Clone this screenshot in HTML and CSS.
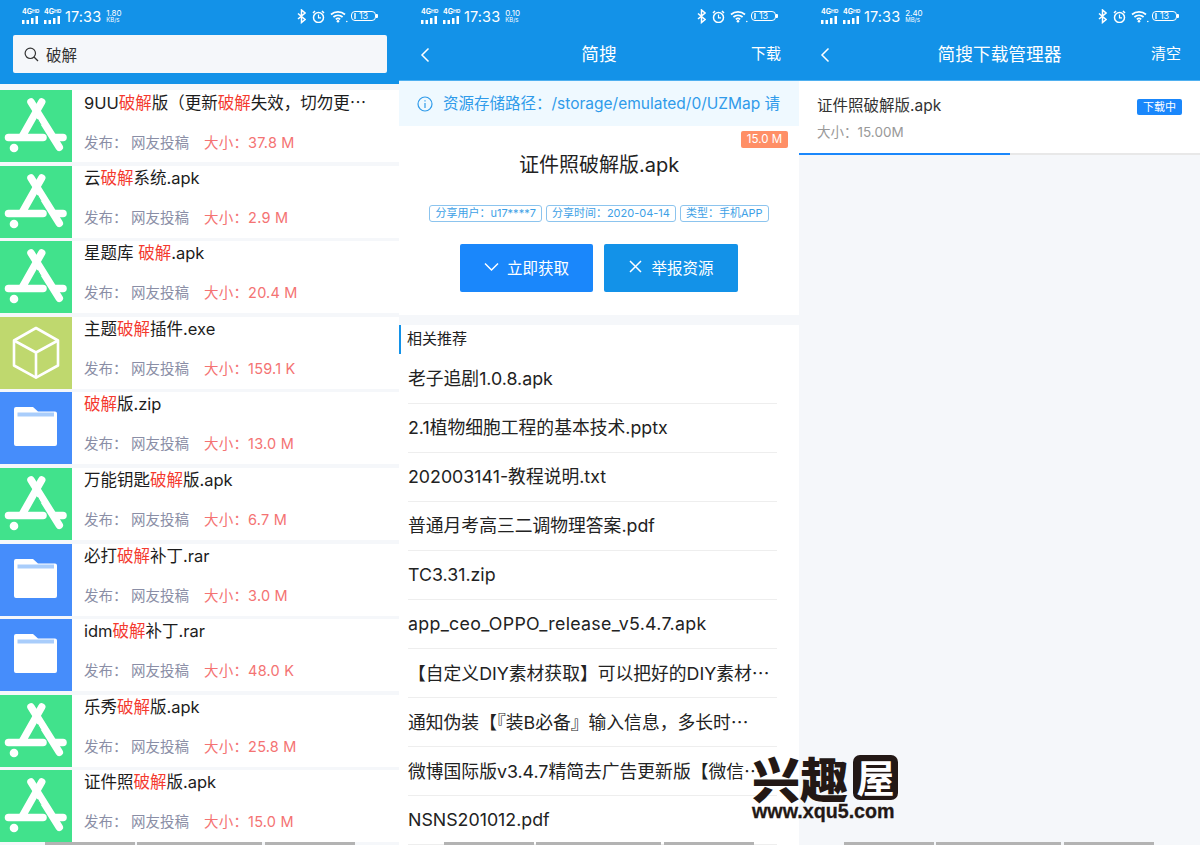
FILE: index.html
```html
<!DOCTYPE html>
<html lang="zh-CN">
<head>
<meta charset="utf-8">
<title>简搜</title>
<link rel="stylesheet" href="styles.css">
</head>
<body>
<svg class="defs" width="0" height="0">
  <defs>
    <g id="appstore">
      <g fill="none" stroke="#fff" stroke-width="7.500" stroke-linecap="round">
        <path d="M31 12 59.300 57.300"/><path d="M41.700 12 23 45"/><path d="M8.500 47.500H43"/><path d="M55 47.500H63"/>
      </g>
      <path d="M37.500 29 41 35" stroke="#41e28c" stroke-width="1"/>
      <circle cx="14" cy="58" r="4.300" fill="#fff"/>
    </g>
    <g id="cube" fill="none" stroke="#fff" stroke-width="2.600" stroke-linejoin="round">
      <path d="M36 11 58 23.500V48.500L36 60.700 14 48.500V23.500Z"/><path d="M14 23.500 36 35.500 58 23.500M36 35.500V60.700"/>
    </g>
    <g id="folder">
      <path d="M14 17a2 2 0 0 1 2-2H33l5 4.500H55a2 2 0 0 1 2 2V52a2 2 0 0 1-2 2H16a2 2 0 0 1-2-2Z" fill="#fff"/>
      <rect x="17.500" y="20.500" width="36.500" height="4" fill="#a9cdfb"/>
    </g>
    <g id="signal" fill="#fff">
      <rect x="0" y="4" width="2.500" height="4"/><rect x="4.500" y="4" width="2.500" height="4"/><rect x="9" y="2" width="2.500" height="6"/><rect x="13.500" y="0" width="2.500" height="8"/>
    </g>
    <g id="bt" fill="none" stroke="#fff" stroke-width="1.500">
      <path d="M1 4.500 8 10.500 4.500 13.500V1L8 4 1 10"/>
    </g>
    <g id="alarm" fill="none" stroke="#fff">
      <circle cx="6.500" cy="7.500" r="5" stroke-width="1.500"/><path d="M6.500 4.500V7.800H9" stroke-width="1.200"/><path d="M1 3 3 1M12 3 10 1" stroke-width="1.500"/>
    </g>
    <g id="wifi" fill="none" stroke="#fff" stroke-width="1.700">
      <path d="M1 5.500A10.500 10.500 0 0 1 15 5.500M3.400 8A7 7 0 0 1 12.600 8M5.800 10.300A3.500 3.500 0 0 1 10.200 10.300"/>
      <circle cx="8" cy="12.300" r="1.300" fill="#fff" stroke="none"/><circle cx="16.800" cy="12.500" r=".8" fill="#fff" stroke="none"/>
    </g>
  </defs>
</svg>
<main class="screens">

  <section class="screen screen-search">
    <header class="blue">
      <div class="status">
        <div class="st-left">
          <span class="net"><i>4G<sup>HD</sup></i><svg width="16" height="8"><use href="#signal"/></svg></span>
          <span class="net"><i>4G<sup>HD</sup></i><svg width="16" height="8"><use href="#signal"/></svg></span>
          <span class="time">17:33</span>
          <span class="speed"><b>1.80</b><b class="unit">KB/s</b></span>
        </div>
        <div class="st-right">
          <svg class="ic-bt" width="9" height="15"><use href="#bt"/></svg>
          <svg width="13" height="13"><use href="#alarm"/></svg>
          <svg width="18" height="14"><use href="#wifi"/></svg>
          <span class="battery">13</span>
        </div>
      </div>
      <div class="searchbox">
        <svg width="15" height="15" viewBox="0 0 15 15" fill="none" stroke="#333" stroke-width="1.200"><circle cx="6.300" cy="6.300" r="5.200"/><path d="M10 10 14 14"/></svg>
        <span>破解</span>
      </div>
    </header>
    <ul class="results">
      <li class="row"><svg class="thumb green" viewBox="0 0 72 72"><use href="#appstore"/></svg><div class="info"><p class="name">9UU<em>破解</em>版（更新<em>破解</em>失效，切勿更<span class="dots">…</span></p><p class="meta"><span class="pub">发布：</span><span class="pub author">网友投稿</span><span class="size">大小：37.8 M</span></p></div></li>
      <li class="row"><svg class="thumb green" viewBox="0 0 72 72"><use href="#appstore"/></svg><div class="info"><p class="name">云<em>破解</em>系统.apk</p><p class="meta"><span class="pub">发布：</span><span class="pub author">网友投稿</span><span class="size">大小：2.9 M</span></p></div></li>
      <li class="row"><svg class="thumb green" viewBox="0 0 72 72"><use href="#appstore"/></svg><div class="info"><p class="name">星题库 <em>破解</em>.apk</p><p class="meta"><span class="pub">发布：</span><span class="pub author">网友投稿</span><span class="size">大小：20.4 M</span></p></div></li>
      <li class="row"><svg class="thumb lime" viewBox="0 0 72 72"><use href="#cube"/></svg><div class="info"><p class="name">主题<em>破解</em>插件.exe</p><p class="meta"><span class="pub">发布：</span><span class="pub author">网友投稿</span><span class="size">大小：159.1 K</span></p></div></li>
      <li class="row"><svg class="thumb azure" viewBox="0 0 72 72"><use href="#folder"/></svg><div class="info"><p class="name"><em>破解</em>版.zip</p><p class="meta"><span class="pub">发布：</span><span class="pub author">网友投稿</span><span class="size">大小：13.0 M</span></p></div></li>
      <li class="row"><svg class="thumb green" viewBox="0 0 72 72"><use href="#appstore"/></svg><div class="info"><p class="name">万能钥匙<em>破解</em>版.apk</p><p class="meta"><span class="pub">发布：</span><span class="pub author">网友投稿</span><span class="size">大小：6.7 M</span></p></div></li>
      <li class="row"><svg class="thumb azure" viewBox="0 0 72 72"><use href="#folder"/></svg><div class="info"><p class="name">必打<em>破解</em>补丁.rar</p><p class="meta"><span class="pub">发布：</span><span class="pub author">网友投稿</span><span class="size">大小：3.0 M</span></p></div></li>
      <li class="row"><svg class="thumb azure" viewBox="0 0 72 72"><use href="#folder"/></svg><div class="info"><p class="name">idm<em>破解</em>补丁.rar</p><p class="meta"><span class="pub">发布：</span><span class="pub author">网友投稿</span><span class="size">大小：48.0 K</span></p></div></li>
      <li class="row"><svg class="thumb green" viewBox="0 0 72 72"><use href="#appstore"/></svg><div class="info"><p class="name">乐秀<em>破解</em>版.apk</p><p class="meta"><span class="pub">发布：</span><span class="pub author">网友投稿</span><span class="size">大小：25.8 M</span></p></div></li>
      <li class="row"><svg class="thumb green" viewBox="0 0 72 72"><use href="#appstore"/></svg><div class="info"><p class="name">证件照<em>破解</em>版.apk</p><p class="meta"><span class="pub">发布：</span><span class="pub author">网友投稿</span><span class="size">大小：15.0 M</span></p></div></li>
    </ul>
    <div class="navbar"><i class="n1"></i><i class="n2"></i><i class="n3"></i></div>
  </section>

  <section class="screen screen-detail">
    <header class="blue">
      <div class="status">
        <div class="st-left">
          <span class="net"><i>4G<sup>HD</sup></i><svg width="16" height="8"><use href="#signal"/></svg></span>
          <span class="net"><i>4G<sup>HD</sup></i><svg width="16" height="8"><use href="#signal"/></svg></span>
          <span class="time">17:33</span>
          <span class="speed"><b>0.10</b><b class="unit">KB/s</b></span>
        </div>
        <div class="st-right">
          <svg class="ic-bt" width="9" height="15"><use href="#bt"/></svg>
          <svg width="13" height="13"><use href="#alarm"/></svg>
          <svg width="18" height="14"><use href="#wifi"/></svg>
          <span class="battery">13</span>
        </div>
      </div>
      <div class="titlebar">
        <svg class="back" width="10" height="16" viewBox="0 0 10 16" fill="none" stroke="#fff" stroke-width="1.500"><path d="M8.500 1.500 2 8 8.500 14.500"/></svg>
        <h1>简搜</h1>
        <span class="action">下载</span>
      </div>
    </header>
    <div class="notice">
      <svg width="16" height="16" viewBox="0 0 16 16" fill="none" stroke="#2f9bea" stroke-width="1.200"><circle cx="8" cy="8" r="7"/><path d="M8 7V12M8 4.200V5.600"/></svg>
      <span>资源存储路径：/storage/emulated/0/UZMap 请</span>
    </div>
    <div class="card">
      <span class="sizebadge">15.0 M</span>
      <h2>证件照破解版.apk</h2>
      <div class="tags"><span>分享用户：u17****7</span><span>分享时间：2020-04-14</span><span>类型：手机APP</span></div>
      <div class="buttons">
        <a class="btn btn-get"><svg width="15" height="15" viewBox="0 0 15 15" fill="none" stroke="#fff" stroke-width="1.500"><path d="M1 4.500 7.500 11 14 4.500"/></svg>立即获取</a>
        <a class="btn btn-report"><svg width="15" height="15" viewBox="0 0 15 15" fill="none" stroke="#fff" stroke-width="1.500"><path d="M2 2 13 13M13 2 2 13"/></svg>举报资源</a>
      </div>
    </div>
    <div class="related">
      <h3>相关推荐</h3>
      <ul class="files">
        <li>老子追剧1.0.8.apk</li>
        <li>2.1植物细胞工程的基本技术.pptx</li>
        <li>202003141-教程说明.txt</li>
        <li>普通月考高三二调物理答案.pdf</li>
        <li>TC3.31.zip</li>
        <li class="wide">app_ceo_OPPO_release_v5.4.7.apk</li>
        <li>【自定义DIY素材获取】可以把好的DIY素材<span class="dots">…</span></li>
        <li>通知伪装【『装B必备』输入信息，多长时<span class="dots">…</span></li>
        <li>微博国际版v3.4.7精简去广告更新版【微信<span class="dots">…</span></li>
        <li>NSNS201012.pdf</li>
      </ul>
    </div>
    <div class="navbar"><i class="n1"></i><i class="n2"></i><i class="n3"></i></div>
  </section>

  <section class="screen screen-manager">
    <header class="blue">
      <div class="status">
        <div class="st-left">
          <span class="net"><i>4G<sup>HD</sup></i><svg width="16" height="8"><use href="#signal"/></svg></span>
          <span class="net"><i>4G<sup>HD</sup></i><svg width="16" height="8"><use href="#signal"/></svg></span>
          <span class="time">17:33</span>
          <span class="speed"><b>2.40</b><b class="unit">MB/s</b></span>
        </div>
        <div class="st-right">
          <svg class="ic-bt" width="9" height="15"><use href="#bt"/></svg>
          <svg width="13" height="13"><use href="#alarm"/></svg>
          <svg width="18" height="14"><use href="#wifi"/></svg>
          <span class="battery">13</span>
        </div>
      </div>
      <div class="titlebar">
        <svg class="back" width="10" height="16" viewBox="0 0 10 16" fill="none" stroke="#fff" stroke-width="1.500"><path d="M8.500 1.500 2 8 8.500 14.500"/></svg>
        <h1>简搜下载管理器</h1>
        <span class="action">清空</span>
      </div>
    </header>
    <div class="task">
      <div class="task-body">
        <div class="task-text">
          <p class="task-name">证件照破解版.apk</p>
          <p class="task-size">大小：15.00M</p>
        </div>
        <span class="state">下载中</span>
      </div>
      <div class="progress"><div class="progress-fill"></div></div>
    </div>
    <div class="navbar"><i class="n1"></i><i class="n2"></i><i class="n3"></i></div>
  </section>
</main>

<div class="watermark">
  <div class="wm-top"><span class="wm-big">兴趣</span><span class="wm-box">屋</span></div>
  <div class="wm-url">www.xqu5.com</div>
</div>
</body>
</html>
```

FILE: styles.css
```css
* { box-sizing: border-box; }
html, body { margin: 0; padding: 0; }
body {
  width: 1200px;
  height: 845px;
  overflow: hidden;
  position: relative;
  background: #fff;
  font-family: Inter, "Noto Sans CJK SC", "Liberation Sans", sans-serif;
  color: #222;
}
p, h1, h2, h3, ul { margin: 0; padding: 0; font-weight: 400; }
ul { list-style: none; }
em { font-style: normal; color: #f43a2f; }
.defs { position: absolute; }
.dots { font-family: "Noto Sans CJK SC", sans-serif; }

.screens { display: flex; width: 1200px; height: 845px; }
.screen { position: relative; height: 845px; overflow: hidden; flex: none; }
.screen-search { width: 399px; background: #f5f7fa; }
.screen-detail { width: 400px; background: #fff; }
.screen-manager { width: 401px; background: #f5f7fa; }

.blue { background: #1392e8; }
.screen-search .blue { height: 84px; }
.screen-detail .blue, .screen-manager .blue { height: 81px; border-bottom: 1px solid #4fb0f0; }

.status { height: 30px; display: flex; justify-content: space-between; align-items: center; padding: 0 22px; color: #fff; }
.st-left, .st-right { display: flex; align-items: center; }
.net { display: flex; flex-direction: column; width: 17px; margin-right: 5px; margin-top: 1px; }
.net i { font-style: normal; font-weight: 700; font-size: 7px; line-height: 7px; height: 7px; margin-bottom: 1px; white-space: nowrap; }
.net sup { font-size: 5px; line-height: 5px; vertical-align: 1px; }
.net svg { display: block; }
.time { font-size: 14.500px; margin-left: -1px; margin-right: 5px; margin-top: 2px; letter-spacing: .1px; }
.speed { display: flex; flex-direction: column; margin-top: 1px; }
.speed b { font-weight: 400; font-size: 8px; line-height: 8px; }
.speed .unit { font-size: 6px; line-height: 6px; }
.st-right { gap: 5px; margin-top: 2px; }
.ic-bt { margin-right: 1px; }
.battery { position: relative; width: 25px; height: 10px; margin-left: -2px; margin-right: 1px; border: 1px solid #fff; border-radius: 4px; font-size: 9px; line-height: 8px; text-align: center; }
.battery::before { content: ""; position: absolute; left: 2px; top: 1px; width: 2px; height: 6px; background: rgba(255,255,255,.7); }
.battery::after { content: ""; position: absolute; right: -3px; top: 2px; width: 2px; height: 4px; background: #fff; border-radius: 0 1px 1px 0; }

.searchbox { margin: 5px 12px 0 13px; height: 38px; background: #f5f7fa; border-radius: 2px; display: flex; align-items: center; padding-left: 11px; gap: 7px; font-size: 15.500px; color: #333; }

.results { padding-top: 6px; display: flex; flex-direction: column; gap: 3.600px; }
.row { height: 72px; display: flex; background: #fff; }
.thumb { width: 72px; height: 72px; flex: none; display: block; }
.green { background: #41e28c; }
.lime { background: #bfd86e; }
.azure { background: #468dfb; }
.info { flex: 1; min-width: 0; padding-left: 12px; }
.name { font-size: 16.500px; line-height: 24px; color: #1c1c1c; white-space: nowrap; }
.meta { display: flex; font-size: 14.500px; line-height: 20px; margin-top: 18px; }
.pub { color: #8a8ea6; }
.author { margin-left: 3.500px; }
.size { color: #f47373; margin-left: 15px; letter-spacing: .2px; }

.titlebar { position: relative; height: 50px; display: flex; align-items: center; justify-content: center; color: #fff; }
.titlebar h1 { font-size: 17.700px; line-height: 24px; margin-top: -1px; }
.back { position: absolute; left: 21px; top: 17px; }
.action { position: absolute; right: 18px; top: 14px; font-size: 15px; line-height: 20px; }
.screen-manager .action { right: 19px; }

.notice { height: 45px; background: #eff9ff; display: flex; align-items: center; padding-left: 18px; gap: 10px; font-size: 15.500px; color: #2f9bea; white-space: nowrap; overflow: hidden; }
.notice svg { flex: none; }
.notice span { margin-top: -4px; }

.card { position: relative; height: 189px; padding-top: 26px; text-align: center; }
.sizebadge { position: absolute; top: 5px; right: 11px; width: 47px; height: 17px; background: #ff8f66; border-radius: 2px; color: #fff; font-size: 11.500px; line-height: 17px; }
.card h2 { font-size: 20px; line-height: 26px; color: #222; }
.tags { display: flex; justify-content: center; gap: 4px; margin-top: 27px; }
.tags span { height: 17px; padding: 0 5px; border: 1px solid #8cc4ee; border-radius: 3px; color: #3d9fe6; font-size: 11px; line-height: 15px; white-space: nowrap; }
.buttons { display: flex; justify-content: center; gap: 11px; margin-top: 22px; }
.btn { width: 133px; height: 48px; padding-bottom: 3px; display: flex; align-items: center; justify-content: center; gap: 8px; color: #fff; font-size: 15.500px; border-radius: 2px; }
.btn-get { background: #1a87fb; }
.btn-report { background: #1392e8; width: 134px; }

.related { border-top: 10px solid #f5f7fa; }
.related h3 { height: 29px; margin-bottom: 1px; border-left: 2px solid #1392e8; padding-left: 6px; font-size: 15px; line-height: 28px; color: #222; }
.files { padding-left: 9px; }
.files li { width: 369px; height: 49px; border-bottom: 1px solid #eee; font-size: 17.800px; line-height: 47px; color: #222; white-space: nowrap; }
.files .wide { letter-spacing: .3px; }

.task { background: #fff; }
.task-body { height: 72px; display: flex; justify-content: space-between; align-items: flex-start; padding: 0 18px; }
.task-name { font-size: 15.500px; line-height: 20px; margin-top: 15px; color: #333; }
.task-size { font-size: 13.500px; line-height: 18px; margin-top: 7px; color: #999; }
.state { margin-top: 18px; width: 45px; height: 16px; background: #1a87fb; border-radius: 2px; color: #fff; font-size: 11px; line-height: 16px; text-align: center; }
.progress { height: 2px; background: #e8e8e8; }
.progress-fill { width: 211px; height: 2px; background: #1a87fb; }

.navbar { position: absolute; left: 45px; bottom: 0; display: flex; gap: 2px; height: 3px; }
.navbar i { display: block; height: 3px; background: #b3b3b3; }
.n1 { width: 90px; }
.n2 { width: 125px; margin-right: 1px; }
.n3 { width: 90px; }

.watermark { position: absolute; left: 752px; top: 755px; width: 146px; color: #231815; }
.wm-top { display: flex; justify-content: space-between; height: 45px; }
.wm-big { font-size: 48px; line-height: 45px; font-weight: 900; font-family: "Noto Sans CJK SC", sans-serif; white-space: nowrap; }
.wm-box { width: 45px; height: 45px; background: #231815; border-radius: 7px; color: #fff; font-size: 38px; line-height: 42px; text-align: center; font-weight: 700; font-family: "Noto Sans CJK SC", sans-serif; }
.wm-url { font-family: "Liberation Sans", sans-serif; font-weight: 700; font-size: 19.700px; line-height: 20px; margin-top: 1px; white-space: nowrap; -webkit-text-stroke: .3px #231815; }
```
